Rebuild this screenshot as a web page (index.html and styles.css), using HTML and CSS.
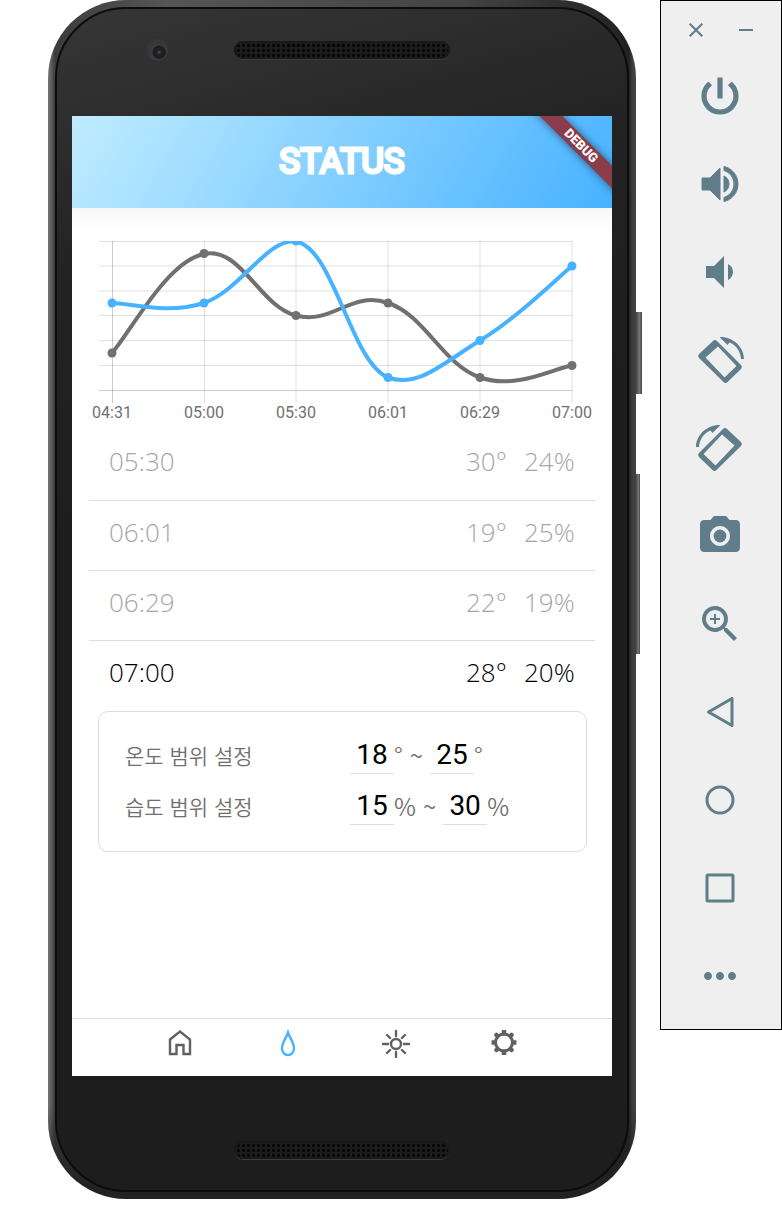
FILE: index.html
```html
<!DOCTYPE html>
<html lang="ko">
<head>
<meta charset="utf-8">
<title>Status</title>
<link rel="stylesheet" href="styles.css">
</head>
<body>
<main class="phone">
  <span class="side-key side-key-power"></span>
  <span class="side-key side-key-volume"></span>
  <div class="phone-face">
    <div class="bezel bezel-top"><span class="camera"></span><span class="speaker"></span></div>
    <div class="screen">
      <header class="app-bar">
        <h1 class="app-title">STATUS</h1>
        <span class="debug">DEBUG</span>
      </header>
      <section class="content">
        <svg class="chart" viewBox="0 0 540 222" role="img" aria-label="Temperature and humidity">
          <defs><clipPath id="plot"><rect x="30" y="33" width="480" height="160"/></clipPath></defs>
          <path class="grid" d="M27 33.500H500M27 58H500M27 83H500M27 107.500H500M27 132.500H500M27 157.500H500M132.500 33V195M224 33V195M316 33V195M408 33V195M500 33V195"/>
          <path class="axis" d="M27 182.500H500M40.500 33V195"/>
          <g clip-path="url(#plot)">
            <g class="series-humidity">
              <path d="M40 145C58 125 95 53 132 46C169 38 187 98 224 107.500C261 117 279 82 316 95C353 107 371 157 408 169.500C445 182 482 160 500 157.500"/>
              <circle cx="40" cy="145" r="4.500"/><circle cx="132" cy="45.500" r="4.500"/><circle cx="224" cy="107.500" r="4.500"/><circle cx="316" cy="95" r="4.500"/><circle cx="408" cy="169.500" r="4.500"/><circle cx="500" cy="157.500" r="4.500"/>
            </g>
            <g class="series-temp">
              <path d="M40 95C58 95 95 107 132 95C169 82 195 30 224 33.500C262 40 279 155 316 169.500C347 180 371 155 408 132.500C445 110 482 73 500 58"/>
              <circle cx="40" cy="95" r="4.500"/><circle cx="132" cy="95" r="4.500"/><circle cx="224" cy="33" r="4.500"/><circle cx="316" cy="169.500" r="4.500"/><circle cx="408" cy="132.500" r="4.500"/><circle cx="500" cy="58" r="4.500"/>
            </g>
          </g>
          <g class="ticks">
            <text x="40" y="210">04:31</text><text x="132" y="210">05:00</text><text x="224" y="210">05:30</text><text x="316" y="210">06:01</text><text x="408" y="210">06:29</text><text x="500" y="210">07:00</text>
          </g>
        </svg>
        <table class="log">
          <tr><td>05:30</td><td class="temp">30°</td><td class="hum">24%</td></tr>
          <tr><td>06:01</td><td class="temp">19°</td><td class="hum">25%</td></tr>
          <tr><td>06:29</td><td class="temp">22°</td><td class="hum">19%</td></tr>
          <tr class="current"><td>07:00</td><td class="temp">28°</td><td class="hum">20%</td></tr>
        </table>
        <form class="settings">
          <label class="range-label" for="temp-min">온도 범위 설정</label>
          <div class="range"><input id="temp-min" value="18"><span class="unit">°</span><span class="tilde">~</span><input aria-label="온도 최대" value="25"><span class="unit">°</span></div>
          <label class="range-label" for="hum-min">습도 범위 설정</label>
          <div class="range"><input id="hum-min" value="15"><span class="unit">%</span><span class="tilde">~</span><input aria-label="습도 최대" value="30"><span class="unit">%</span></div>
        </form>
      </section>
      <nav class="tabs">
        <button class="tab" aria-label="Home"><svg viewBox="0 0 30 30"><path d="M5 11.500 15 3.500l10 8V26h-6.500v-9h-7v9H5z"/></svg></button>
        <button class="tab active" aria-label="Humidity"><svg viewBox="0 0 30 30"><path d="M15 4.500c-2 6-6 10-6 16a6 6.500 0 0 0 12 0c0-6-4-10-6-16z"/></svg></button>
        <button class="tab" aria-label="Light"><svg viewBox="0 0 30 30"><g stroke-linecap="round"><circle cx="15" cy="16" r="5"/><path d="M15 3v5M15 24v5M2 16h5M23 16h5M6 7l3 3M21 22l3 3M24 7l-3 3M9 22l-3 3"/></g></svg></button>
        <button class="tab" aria-label="Settings"><svg viewBox="0 0 30 30"><circle cx="15" cy="14.500" r="8.500" stroke-width="3"/><g stroke-width="4.500" stroke-linecap="square"><path d="M15 4.300v1M15 23.700v1M4.800 14.500h1M24.200 14.500h1"/></g><g stroke-width="4.500" stroke-linecap="round"><path d="M7.500 7l1 1M22.500 7l-1 1M7.500 22l1-1M22.500 22l-1-1"/></g></svg></button>
      </nav>
    </div>
    <div class="bezel bezel-bottom"><span class="speaker"></span></div>
  </div>
</main>
<aside class="toolbar">
  <div class="window-keys">
    <button aria-label="Close"><svg viewBox="0 0 24 24"><path d="M19 6.410 17.590 5 12 10.590 6.410 5 5 6.410 10.590 12 5 17.590 6.410 19 12 13.410 17.590 19 19 17.590 13.410 12z"/></svg></button>
    <button aria-label="Minimize"><svg viewBox="0 0 24 24"><path d="M5 11h14v2H5z"/></svg></button>
  </div>
  <button class="tool" aria-label="Power"><svg viewBox="0 0 24 24"><path stroke-width=".6" stroke="#607d8b" d="M13 3h-2v10h2V3zm4.830 2.170-1.420 1.420C17.990 7.860 19 9.810 19 12c0 3.870-3.130 7-7 7s-7-3.130-7-7c0-2.190 1.010-4.140 2.580-5.420L6.170 5.170C4.230 6.820 3 9.260 3 12c0 4.970 4.030 9 9 9s9-4.030 9-9c0-2.740-1.230-5.180-3.170-6.830z"/></svg></button>
  <button class="tool" aria-label="Volume up"><svg viewBox="0 0 24 24"><path stroke-width=".5" stroke="#607d8b" d="M3 9v6h4l5 5V4L7 9H3zm13.500 3A4.500 4.500 0 0 0 14 7.970v8.050c1.480-.73 2.500-2.250 2.500-4.020zM14 3.230v2.060c2.890.86 5 3.540 5 6.710s-2.110 5.850-5 6.710v2.060c4.010-.91 7-4.490 7-8.770s-2.990-7.860-7-8.770z"/></svg></button>
  <button class="tool" aria-label="Volume down"><svg viewBox="0 0 24 24"><path d="M18.500 12A4.500 4.500 0 0 0 16 7.970v8.050c1.480-.73 2.500-2.250 2.500-4.020zM5 9v6h4l5 5V4L9 9H5z"/></svg></button>
  <button class="tool" aria-label="Rotate left"><svg viewBox="0 0 48 48"><g transform="matrix(-1 0 0 1 48 0)"><path fill-rule="evenodd" d="M27 5a3 3 0 0 1 4 0l14 13a3 3 0 0 1 0 4L20.500 46a3 3 0 0 1-4 0l-13.500-13a3 3 0 0 1 0-4zM26 10.500 7.500 30l12 11.500L38.500 21.500z"/><path d="M0 23C0 11 11 .5 24.500 1l-8 8-2-2.500C8 9 3.500 15 3 23z"/></g></svg></button>
  <button class="tool" aria-label="Rotate right"><svg viewBox="0 0 48 48"><path fill-rule="evenodd" d="M27 5a3 3 0 0 1 4 0l14 13a3 3 0 0 1 0 4L20.500 46a3 3 0 0 1-4 0l-13.500-13a3 3 0 0 1 0-4zM26 10.500 7.500 30l12 11.500L38.500 21.500z"/><path d="M0 23C0 11 11 .5 24.500 1l-8 8-2-2.500C8 9 3.500 15 3 23z"/></svg></button>
  <button class="tool" aria-label="Screenshot"><svg viewBox="0 0 24 24"><circle cx="12" cy="12" r="3.200"/><path d="M9 2 7.170 4H4c-1.100 0-2 .9-2 2v12c0 1.100.9 2 2 2h16c1.100 0 2-.9 2-2V6c0-1.100-.9-2-2-2h-3.170L15 2H9zm3 15c-2.760 0-5-2.240-5-5s2.240-5 5-5 5 2.240 5 5-2.240 5-5 5z"/></svg></button>
  <button class="tool" aria-label="Zoom"><svg viewBox="0 0 24 24"><path d="M15.500 14h-.79l-.28-.27A6.500 6.500 0 1 0 13.730 14.430l.27.28v.79l5 4.990L20.490 19l-4.990-5zm-6 0C7.010 14 5 11.990 5 9.500S7.010 5 9.500 5 14 7.010 14 9.500 11.990 14 9.500 14zM12 10h-2v2H9v-2H7V9h2V7h1v2h2v1z"/></svg></button>
  <button class="tool line" aria-label="Back"><svg viewBox="0 0 48 48"><path d="M12.500 24 36 10.500v27z"/></svg></button>
  <button class="tool line" aria-label="Home key"><svg viewBox="0 0 48 48"><circle cx="24" cy="24" r="13"/></svg></button>
  <button class="tool line" aria-label="Overview"><svg viewBox="0 0 48 48"><rect x="11" y="11" width="26" height="26" rx="1"/></svg></button>
  <button class="tool" aria-label="More"><svg viewBox="0 0 24 24"><path d="M6 10c-1.100 0-2 .9-2 2s.9 2 2 2 2-.9 2-2-.9-2-2-2zm12 0c-1.100 0-2 .9-2 2s.9 2 2 2 2-.9 2-2-.9-2-2-2zm-6 0c-1.100 0-2 .9-2 2s.9 2 2 2 2-.9 2-2-.9-2-2-2z"/></svg></button>
</aside>
</body>
</html>
```
FILE: styles.css
```css
* { box-sizing: border-box; }
body {
  margin: 0;
  padding-left: 48px;
  display: flex;
  align-items: flex-start;
  gap: 24px;
  background: #fff;
  font-family: "Noto Sans CJK KR", Roboto, sans-serif;
}
button { border: 0; padding: 0; background: none; }
svg { display: block; }

.phone {
  position: relative;
  flex: 1;
  padding: 7px;
  border-radius: 78px;
  background:
    linear-gradient(transparent 92%, #222 99%),
    linear-gradient(90deg, #777 0, #3c3c3c 7px, #555 20%, #444 70%, #222 calc(100% - 7px), #3d3b3c calc(100% - 4px), #444 100%);
}
.phone-face {
  border: 2px solid #0c0c0c;
  border-radius: 71px;
  padding: 0 15px;
  background: linear-gradient(165deg, #363636 0, #232323 20%, #1d1d1d 40%, #1d1d1d 100%);
}
.side-key {
  position: absolute;
  left: 100%;
  background: linear-gradient(90deg, #444, #777 60%, #444);
}
.side-key-power { top: 312px; width: 6px; height: 82px; }
.side-key-volume { top: 474px; width: 4px; height: 180px; }
.bezel {
  display: grid;
  grid-template-columns: 1fr 216px 1fr;
  justify-items: center;
}
.bezel-top { height: 107px; padding-top: 30px; }
.bezel-bottom { height: 114px; padding-top: 63px; }
.speaker {
  grid-column: 2;
  grid-row: 1;
  width: 216px;
  height: 18px;
  margin-top: 2px;
  border-radius: 9px;
  background: radial-gradient(circle, #050505 1px, #1c1c1c 2px) 2px 2px / 5px 5px;
  box-shadow: 0 1px 0 #3c3c3c, inset 0 0 0 2px #191919;
}
.camera {
  grid-column: 1;
  grid-row: 1;
  width: 22px;
  height: 22px;
  margin-left: 7px;
  border-radius: 50%;
  background: radial-gradient(circle at 60% 60%, #6b4a55 0, #25212a 2px, #1b1a20 6px, #3b3b3d 7px, #363638 11px);
}

.screen {
  display: flex;
  flex-direction: column;
  min-height: 960px;
  background: #fff;
}
.app-bar {
  position: relative;
  overflow: hidden;
  height: 92px;
  display: flex;
  align-items: center;
  justify-content: center;
  background: linear-gradient(120deg, #c0ecff, #47b2ff);
}
.app-title {
  margin: 0;
  color: #fff;
  font: 400 35px/40px Roboto, sans-serif;
  -webkit-text-stroke: 3px #fff;
  stroke-linejoin: round;
}
.debug {
  position: absolute;
  top: 22px;
  right: -29px;
  width: 120px;
  transform: rotate(45deg);
  background: #8b3c4b;
  box-shadow: 0 0 8px rgba(0, 0, 0, .5);
  color: #fff;
  font: 900 13px/16px Roboto, sans-serif;
  text-align: center;
}
.content {
  flex: 1;
  background: linear-gradient(#f8f8f8, #fff 24px);
}

.chart { width: 100%; }
.grid, .axis { fill: none; stroke: rgba(0, 0, 0, .12); }
.axis { stroke: rgba(0, 0, 0, .2); }
.series-humidity path, .series-temp path { fill: none; stroke-width: 4px; }
.series-humidity path { stroke: #707070; }
.series-humidity circle { fill: #707070; }
.series-temp path { stroke: #47b2ff; }
.series-temp circle { fill: #47b2ff; }
.ticks { fill: #707070; font: 16px Roboto, sans-serif; text-anchor: middle; }

.log {
  width: calc(100% - 34px);
  margin: 0 17px;
  border-collapse: collapse;
  color: #a6a6a6;
  font-family: "Open Sans", sans-serif;
  font-size: 26px;
  font-weight: 300;
  line-height: 36px;
}
.log td { height: 70px; padding: 0 20px 7px; border-bottom: 1px solid #ddd; }
.log .temp { width: 58px; padding: 0 0 7px; }
.log .hum { width: 71px; padding: 0 0 7px; }
.log .current { color: #000; }
.log .current td { height: 71px; border: 0; }

.settings {
  display: grid;
  grid-template-columns: 225px 1fr;
  row-gap: 11px;
  margin: 0 25px 0 26px;
  padding: 23px 26px 25px;
  border: 1px solid #ddd;
  border-radius: 10px;
  color: #707070;
}
.range-label { font-size: 21px; font-weight: 350; line-height: 40px; }
.range { display: flex; align-items: center; height: 39px; }
.range input {
  width: 44px;
  height: 39px;
  padding: 0;
  border: 0;
  border-bottom: 1px solid #ddd;
  background: none;
  color: #000;
  font: 28px Roboto, sans-serif;
  text-align: center;
}
.unit { font-size: 24px; font-weight: 350; line-height: 36px; }
.tilde { padding: 0 7px; font-size: 24px; font-weight: 350; line-height: 36px; }

.tabs {
  height: 58px;
  display: flex;
  align-items: center;
  padding: 0 54px 10px;
  border-top: 1px solid #ddd;
}
.tab { flex: 1; display: flex; justify-content: center; color: #606060; }
.tab.active { color: #47b2ff; }
.tab svg { width: 30px; height: 30px; fill: none; stroke: currentColor; stroke-width: 2.4px; }
.tab svg g[stroke-width] { stroke-width: 4.5px; }

.toolbar {
  flex: 0 0 122px;
  padding: 17px 2px 9px 0;
  display: flex;
  flex-direction: column;
  align-items: center;
  border: 1px solid #000;
  background: #efefef;
}
.window-keys { display: flex; gap: 26px; margin: 0 0 10px 2px; }
.window-keys svg { width: 24px; height: 24px; fill: #607d8b; }
.tool { height: 88px; display: flex; align-items: center; }
.tool svg { width: 48px; height: 48px; fill: #607d8b; }
.line svg { fill: none; stroke: #607d8b; stroke-width: 3px; stroke-linejoin: round; }
```
